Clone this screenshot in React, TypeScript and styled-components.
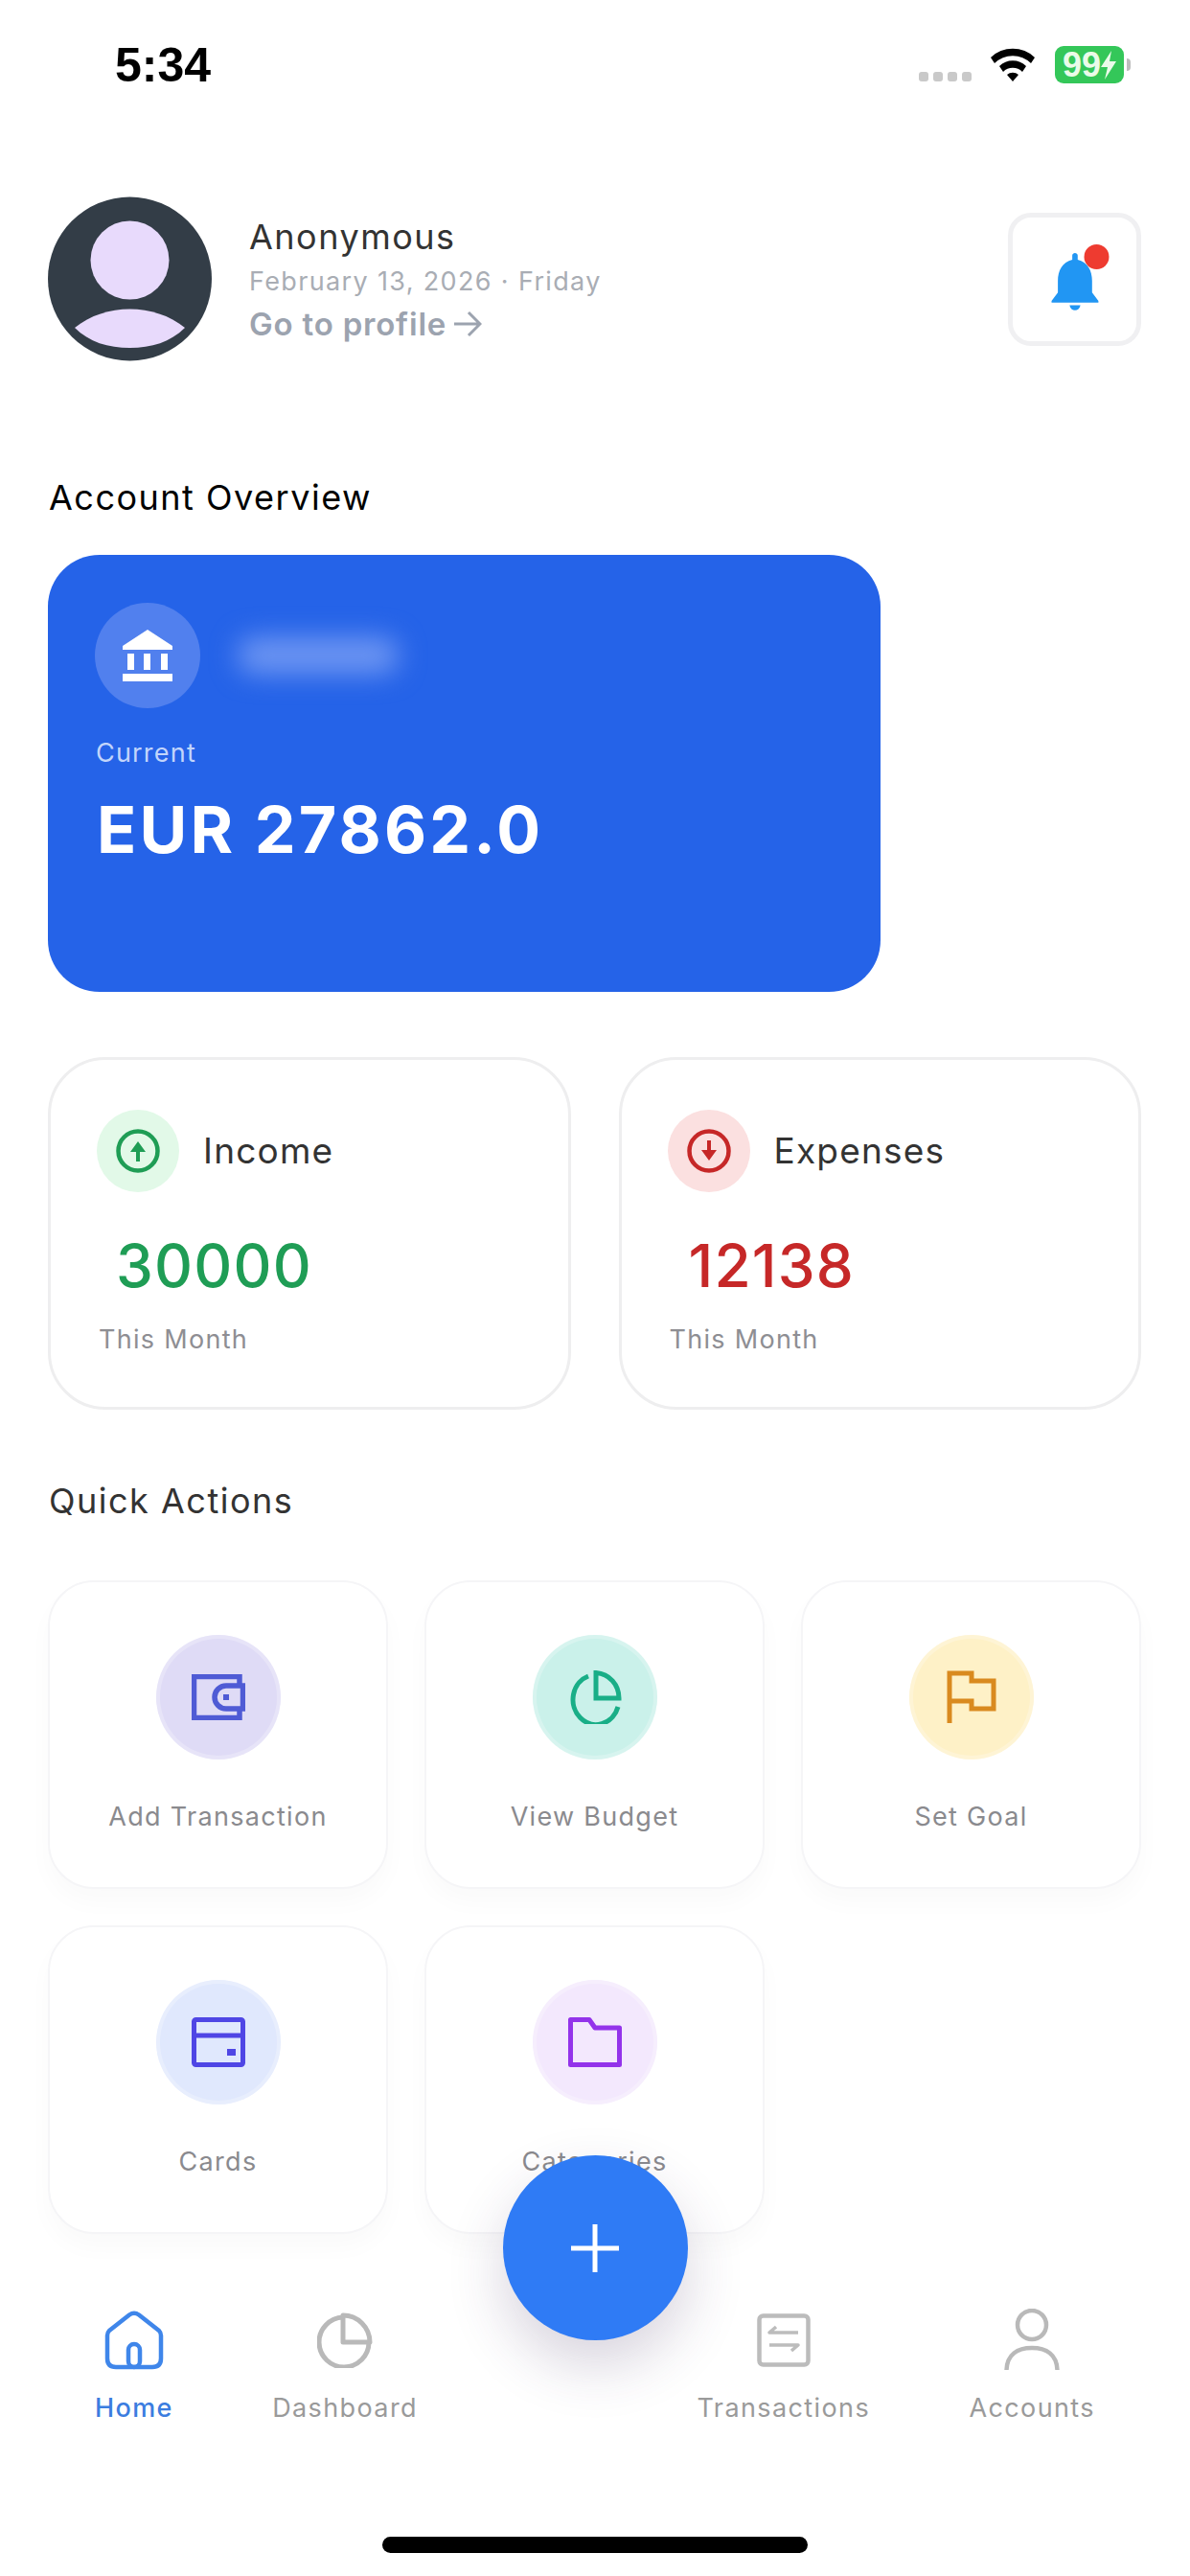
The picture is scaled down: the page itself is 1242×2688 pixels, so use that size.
import React from "react";
import styled, { createGlobalStyle } from "styled-components";

const GlobalStyle = createGlobalStyle`
  html, body {
    margin: 0;
    padding: 0;
    background: #fff;
  }
  * {
    box-sizing: border-box;
  }
`;

const Screen = styled.div`
  position: relative;
  width: 1242px;
  height: 2688px;
  overflow: hidden;
  display: flex;
  flex-direction: column;
  background: #fff;
  font-family: Inter, "Liberation Sans", sans-serif;
`;

const StatusBar = styled.div`
  height: 110px;
  padding: 41px 69px 0 120px;
  display: flex;
  align-items: flex-start;
  justify-content: space-between;
`;

const Clock = styled.span`
  font-family: "Liberation Sans", sans-serif;
  font-size: 50px;
  line-height: 54px;
  font-weight: 700;
  color: #000;
`;

const StatusIcons = styled.div`
  display: flex;
  align-items: flex-start;
  margin-top: 7px;
`;

const SignalDots = styled.div`
  display: flex;
  gap: 5px;
  margin: 27px 20px 0 0;
`;

const SignalDot = styled.span`
  width: 10px;
  height: 10px;
  border-radius: 3px;
  background: #c9c9c9;
`;

const Battery = styled.div`
  width: 72px;
  height: 39px;
  margin-left: 21px;
  border-radius: 9px;
  background: #34c759;
  color: #eafbe9;
  font-family: "Liberation Sans", sans-serif;
  font-size: 36px;
  font-weight: 700;
  line-height: 39px;
  display: flex;
  align-items: center;
  justify-content: center;
  position: relative;
  &::after {
    content: "";
    position: absolute;
    right: -7px;
    top: 13px;
    width: 4px;
    height: 13px;
    border-radius: 0 4px 4px 0;
    background: #bdbdbd;
  }
`;

const Header = styled.header`
  margin-top: 95px;
  padding: 0 51px 0 50px;
  display: flex;
  align-items: center;
`;

const Avatar = styled.div`
  width: 171px;
  height: 172px;
  flex: none;
`;

const Who = styled.div`
  margin-left: 39px;
  flex: 1;
  display: flex;
  flex-direction: column;
  gap: 5px;
`;

const Name = styled.div`
  font-size: 36px;
  line-height: 46px;
  font-weight: 400;
  letter-spacing: 1.5px;
  color: #333;
`;

const DateLine = styled.div`
  font-size: 27px;
  line-height: 38px;
  letter-spacing: 1.35px;
  color: #a9adb4;
`;

const ProfileLink = styled.div`
  display: flex;
  align-items: center;
  gap: 7px;
  font-size: 33px;
  line-height: 40px;
  font-weight: 600;
  letter-spacing: 0.8px;
  color: #9ca3af;
`;

const BellButton = styled.button`
  width: 139px;
  height: 139px;
  padding: 0;
  flex: none;
  background: #fff;
  border: 5px solid #f0f0f2;
  border-radius: 24px;
  display: flex;
  align-items: center;
  justify-content: center;
`;

const SectionTitle = styled.h2<{ $dark?: boolean }>`
  margin: 0;
  padding-left: 51px;
  font-size: 36px;
  line-height: 44px;
  font-weight: 400;
  letter-spacing: 1.5px;
  color: ${(p) => (p.$dark ? "#000" : "#333")};
`;

const OverviewTitle = styled(SectionTitle)`
  margin-top: 120px;
`;

const QuickTitle = styled(SectionTitle)`
  margin-top: 73px;
`;

const BalanceCard = styled.div`
  margin: 38px 0 0 50px;
  width: 869px;
  height: 456px;
  padding: 50px 49px;
  border-radius: 54px;
  background: #2563e8;
  color: #fff;
`;

const BankRow = styled.div`
  display: flex;
  align-items: center;
  gap: 39px;
`;

const BankIcon = styled.div`
  width: 110px;
  height: 110px;
  border-radius: 50%;
  background: #5180ee;
  display: flex;
  align-items: center;
  justify-content: center;
`;

const BlurredName = styled.div`
  width: 168px;
  height: 38px;
  border-radius: 18px;
  background: #6e96f2;
  filter: blur(14px);
`;

const AccountType = styled.div`
  margin-top: 29px;
  margin-left: 1px;
  font-size: 27px;
  line-height: 36px;
  letter-spacing: 1.2px;
  color: #c2d5fb;
`;

const Balance = styled.div`
  margin-top: 21px;
  margin-left: 2px;
  font-size: 68px;
  line-height: 80px;
  font-weight: 700;
  letter-spacing: 3.2px;
`;

const StatsRow = styled.div`
  margin-top: 68px;
  padding: 0 51px 0 50px;
  display: grid;
  grid-template-columns: repeat(2, 1fr);
  gap: 50px;
`;

const StatCard = styled.div`
  height: 368px;
  padding: 52px 50px;
  border: 3px solid #eeeeef;
  border-radius: 60px;
  background: #fff;
`;

const StatHead = styled.div`
  display: flex;
  align-items: center;
  gap: 25px;
  margin-left: -2px;
`;

const StatBadge = styled.div<{ $bg: string }>`
  width: 86px;
  height: 86px;
  border-radius: 50%;
  background: ${(p) => p.$bg};
  display: flex;
  align-items: center;
  justify-content: center;
`;

const StatLabel = styled.div`
  font-size: 37px;
  line-height: 46px;
  letter-spacing: 1.2px;
  color: #333;
`;

const StatValue = styled.div<{ $color: string; $indent: number }>`
  margin: 39px 0 0 ${(p) => p.$indent}px;
  font-size: 62px;
  line-height: 76px;
  font-weight: 500;
  letter-spacing: 1.2px;
  color: ${(p) => p.$color};
`;

const StatNote = styled.div`
  margin-top: 21px;
  font-size: 27px;
  line-height: 36px;
  letter-spacing: 1.3px;
  color: #8e8e93;
`;

const ActionGrid = styled.div`
  margin-top: 61px;
  padding: 0 51px 0 50px;
  display: grid;
  grid-template-columns: repeat(3, 1fr);
  column-gap: 38px;
  row-gap: 38px;
`;

const ActionCard = styled.div`
  height: 322px;
  padding-top: 55px;
  display: flex;
  flex-direction: column;
  align-items: center;
  border: 2px solid #f5f5f7;
  border-radius: 48px;
  background: #fff;
  box-shadow: 0 14px 26px rgba(0, 0, 0, 0.025);
`;

const ActionBadge = styled.div<{ $bg: string }>`
  width: 130px;
  height: 130px;
  border-radius: 50%;
  background: ${(p) => p.$bg};
  box-shadow: inset 0 0 0 4px rgba(255, 255, 255, 0.25);
  display: flex;
  align-items: center;
  justify-content: center;
  svg {
    filter: blur(0.6px);
  }
`;

const ActionLabel = styled.div`
  margin-top: 42px;
  font-size: 27px;
  line-height: 36px;
  letter-spacing: 1.3px;
  color: #8a8a8e;
`;

const TabBar = styled.nav`
  margin-top: auto;
  padding: 0 99px;
  display: flex;
  justify-content: space-between;
`;

const TabItem = styled.div<{ $active?: boolean }>`
  display: flex;
  flex-direction: column;
  align-items: center;
  gap: 18px;
  font-size: 27px;
  line-height: 40px;
  letter-spacing: 1.4px;
  font-weight: ${(p) => (p.$active ? 500 : 400)};
  color: ${(p) => (p.$active ? "#3b7de0" : "#9a9a9a")};
`;

const TabIcon = styled.div`
  height: 66px;
  display: flex;
  align-items: center;
  justify-content: center;
  svg {
    filter: blur(0.6px);
  }
`;

const FabSpacer = styled.div`
  width: 85px;
`;

const Fab = styled.button`
  position: absolute;
  left: 50%;
  top: 2249px;
  width: 193px;
  height: 193px;
  margin-left: -96.5px;
  padding: 0;
  border: 0;
  border-radius: 50%;
  background: #2f7bf5;
  box-shadow: 0 26px 60px rgba(60, 40, 90, 0.2);
  display: flex;
  align-items: center;
  justify-content: center;
`;

const HomeIndicator = styled.div`
  width: 444px;
  height: 17px;
  margin: 114px auto 24px;
  border-radius: 9px;
  background: #000;
`;

const PIN = "#4f5bd5";

const tabs = [
  {
    label: "Home",
    active: true,
    icon: (
      <svg width="62" height="62" viewBox="0 0 62 62" fill="none" stroke="#3f86ea" strokeWidth="4.5" strokeLinejoin="round">
        <path d="M26 4.5 L5 21 Q3 23 3 26 V50 Q3 59 12 59 H50 Q59 59 59 50 V26 Q59 23 57 21 L36 4.5 Q31 1 26 4.5 Z" />
        <rect x="25" y="35" width="12" height="24" rx="6" />
      </svg>
    ),
  },
  {
    label: "Dashboard",
    icon: (
      <svg width="58" height="58" viewBox="0 0 58 58" fill="none" stroke="#b9b9b9" strokeWidth="5">
        <path d="M27 5 A26 26 0 1 0 54 31" />
        <path d="M27 3 V31 H55 A28 28 0 0 0 27 3 Z" strokeLinejoin="round" />
      </svg>
    ),
  },
  { spacer: true, label: "" },
  {
    label: "Transactions",
    icon: (
      <svg width="56" height="56" viewBox="0 0 56 56" fill="none" stroke="#bcbcbc" strokeWidth="4.5" strokeLinejoin="round">
        <rect x="2.5" y="2.5" width="51" height="51" rx="4" />
        <path d="M43 20 H13 L20 14" strokeWidth="3.5" />
        <path d="M13 33 H43 L36 39" strokeWidth="3.5" />
      </svg>
    ),
  },
  {
    label: "Accounts",
    icon: (
      <svg width="58" height="66" viewBox="0 0 58 66" fill="none" stroke="#b9b9b9" strokeWidth="4.5">
        <circle cx="29" cy="17" r="15" />
        <path d="M2.5 64 C3 48 14 41 29 41 C44 41 55 48 55.5 64" />
      </svg>
    ),
  },
];

const actions = [
  {
    label: "Add Transaction",
    bg: "#dfdbf6",
    icon: (
      <svg width="56" height="48" viewBox="0 0 56 48" fill="none" stroke={PIN} strokeWidth="5.5">
        <path d="M50 12 V2.5 H2.5 V45.5 H50 V36" />
        <path d="M53.5 12 H36 A12 12 0 0 0 36 36 H53.5 Z" />
        <rect x="33" y="21" width="6" height="6" fill={PIN} stroke="none" />
      </svg>
    ),
  },
  {
    label: "View Budget",
    bg: "#caf1ea",
    icon: (
      <svg width="56" height="56" viewBox="0 0 56 56" fill="none" stroke="#19ae87" strokeWidth="5">
        <path d="M21 6 A24 26 0 1 0 52 38" />
        <path d="M29 2.5 V29 H53 C53 15 43 3.5 29 2.5 Z" />
      </svg>
    ),
  },
  {
    label: "Set Goal",
    bg: "#fef1c7",
    icon: (
      <svg width="52" height="56" viewBox="0 0 52 56" fill="none" stroke="#d98a1f" strokeWidth="5">
        <path d="M3 55 V3 H26 V11 H49 V40 H26 V32 H3" />
      </svg>
    ),
  },
  {
    label: "Cards",
    bg: "#e0e8fd",
    icon: (
      <svg width="56" height="52" viewBox="0 0 56 52" fill="none" stroke="#4f46e5" strokeWidth="5">
        <rect x="2.5" y="2.5" width="51" height="47" rx="2" />
        <path d="M2.5 19 H53.5" />
        <rect x="37" y="33" width="9" height="7" fill="#4f46e5" stroke="none" />
      </svg>
    ),
  },
  {
    label: "Categories",
    bg: "#f3e8fd",
    icon: (
      <svg width="56" height="52" viewBox="0 0 56 52" fill="none" stroke="#9333ea" strokeWidth="5" strokeLinejoin="round">
        <path d="M2.5 2.5 H22 L28 11 H53.5 V49.5 H2.5 Z" />
      </svg>
    ),
  },
];

function ArrowCircle({ color, up }: { color: string; up?: boolean }) {
  return (
    <svg width="46" height="46" viewBox="0 0 46 46" fill="none">
      <circle cx="23" cy="23" r="20.5" stroke={color} strokeWidth="4.5" />
      <g transform={up ? undefined : "rotate(180 23 23)"}>
        <path d="M23 13 L31 24 H25 V34 H21 V24 H15 Z" fill={color} />
      </g>
    </svg>
  );
}

export default function App() {
  return (
    <Screen>
      <GlobalStyle />
      <StatusBar>
        <Clock>5:34</Clock>
        <StatusIcons>
          <SignalDots>
            <SignalDot />
            <SignalDot />
            <SignalDot />
            <SignalDot />
          </SignalDots>
          <svg width="46" height="37" viewBox="0 0 46 37">
            <path d="M0 12 A33 33 0 0 1 46 12 L42 18 A27 27 0 0 0 4 18 Z" />
            <path d="M9 21 A20 20 0 0 1 37 21 L33 27 A14 14 0 0 0 13 27 Z" />
            <path d="M17 30 A9 9 0 0 1 29 30 L23 37 Z" />
          </svg>
          <Battery>
            99
            <svg width="16" height="30" viewBox="0 0 16 30">
              <path d="M11 0 L0 17 H7 L4 30 L16 11 H9 Z" fill="#eafbe9" />
            </svg>
          </Battery>
        </StatusIcons>
      </StatusBar>

      <Header>
        <Avatar>
          <svg width="171" height="172" viewBox="0 0 171 172">
            <circle cx="85.5" cy="86" r="85.5" fill="#333d47" />
            <circle cx="85.5" cy="66.5" r="41" fill="#e8dafc" />
            <path d="M28 137 C60 111 111 111 143 137 C128 152 108 158 85.5 158 C63 158 43 152 28 137 Z" fill="#e8dafc" />
          </svg>
        </Avatar>
        <Who>
          <Name>Anonymous</Name>
          <DateLine>February 13, 2026 · Friday</DateLine>
          <ProfileLink>
            Go to profile
            <svg width="30" height="30" viewBox="0 0 30 30" fill="none" stroke="#9ca3af" strokeWidth="3">
              <path d="M1 15 H27 M16 3 L28 15 L16 27" />
            </svg>
          </ProfileLink>
        </Who>
        <BellButton>
          <svg width="58" height="72" viewBox="0 0 58 72" overflow="visible">
            <g transform="translate(1.7 8) scale(0.94 0.88)">
              <path d="M26 4 C26 0 32 0 32 4 V9 C43 12 48 22 48 34 V48 L55 58 V60 H3 V58 L10 48 V34 C10 22 15 12 26 9 Z" fill="#2196f3" />
              <path d="M23 63 H35 C34 71 24 71 23 63 Z" fill="#2196f3" />
            </g>
            <circle cx="51.5" cy="13" r="13" fill="#ee3b30" />
          </svg>
        </BellButton>
      </Header>

      <OverviewTitle $dark>Account Overview</OverviewTitle>
      <BalanceCard>
        <BankRow>
          <BankIcon>
            <svg width="52" height="54" viewBox="0 0 52 54" fill="#fff">
              <path d="M26 0 L52 17 V21 H0 V17 Z" />
              <rect x="5" y="25" width="7" height="17" />
              <rect x="22" y="25" width="7" height="17" />
              <rect x="40" y="25" width="7" height="17" />
              <rect x="0" y="46" width="52" height="8" />
            </svg>
          </BankIcon>
          <BlurredName />
        </BankRow>
        <AccountType>Current</AccountType>
        <Balance>EUR 27862.0</Balance>
      </BalanceCard>

      <StatsRow>
        <StatCard>
          <StatHead>
            <StatBadge $bg="#e2f9e8">
              <ArrowCircle color="#1f9d55" up />
            </StatBadge>
            <StatLabel>Income</StatLabel>
          </StatHead>
          <StatValue $color="#1f9d55" $indent={18}>30000</StatValue>
          <StatNote>This Month</StatNote>
        </StatCard>
        <StatCard>
          <StatHead>
            <StatBadge $bg="#fbe0e0">
              <ArrowCircle color="#c62828" />
            </StatBadge>
            <StatLabel>Expenses</StatLabel>
          </StatHead>
          <StatValue $color="#c62828" $indent={20}>12138</StatValue>
          <StatNote>This Month</StatNote>
        </StatCard>
      </StatsRow>

      <QuickTitle>Quick Actions</QuickTitle>
      <ActionGrid>
        {actions.map((a) => (
          <ActionCard key={a.label}>
            <ActionBadge $bg={a.bg}>{a.icon}</ActionBadge>
            <ActionLabel>{a.label}</ActionLabel>
          </ActionCard>
        ))}
      </ActionGrid>

      <TabBar>
        {tabs.map((t) =>
          t.spacer ? (
            <FabSpacer key="fab" />
          ) : (
            <TabItem key={t.label} $active={t.active}>
              <TabIcon>{t.icon}</TabIcon>
              {t.label}
            </TabItem>
          )
        )}
      </TabBar>
      <HomeIndicator />

      <Fab>
        <svg width="50" height="50" viewBox="0 0 50 50" fill="#fff">
          <rect x="22.5" y="0" width="5" height="50" />
          <rect x="0" y="22.5" width="50" height="5" />
        </svg>
      </Fab>
    </Screen>
  );
}
